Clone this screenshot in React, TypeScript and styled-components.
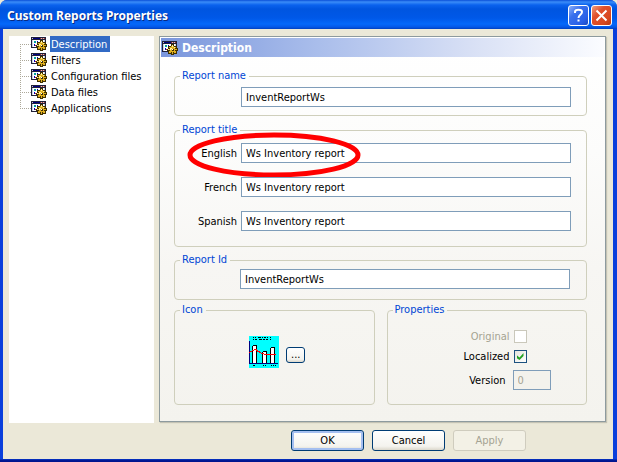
import React, { useState } from "react";
import styled, { createGlobalStyle, css } from "styled-components";

const UI_FONT = `"DejaVu Sans Condensed", "DejaVu Sans", "Liberation Sans", sans-serif`;

const GlobalStyle = createGlobalStyle`
  *, *::before, *::after { box-sizing: border-box; }
  body {
    margin: 0;
    background: #ece9d8;
    color: #000;
    font-family: ${UI_FONT};
    font-stretch: condensed;
    font-size: 11px;
    line-height: 14px;
  }
  button, input { font: inherit; color: inherit; margin: 0; }
`;

const Window = styled.main`
  display: flex;
  flex-direction: column;
  min-height: 100vh;
  border-radius: 7px 7px 0 0;
  overflow: hidden;
  background: #0a3fdc;
`;

const TitleBar = styled.header`
  display: flex;
  align-items: center;
  gap: 2px;
  height: 29px;
  padding: 2px 5px 0 7px;
  background: linear-gradient(
    #0a4fd8 0,
    #3a8cf8 2px,
    #0a62ee 5px,
    #0055e0 9px,
    #0058e8 18px,
    #0468fa 24px,
    #0458e8 27px,
    #0040c0 29px
  );
`;

const Title = styled.h1`
  flex: 1;
  margin: 0;
  padding-top: 1px;
  color: #fff;
  font: bold 12px/18px "Noto Sans", "Open Sans", sans-serif;
  text-shadow: 1px 1px 0 #0a2a80;
`;

const CaptionButton = styled.button<{ $close?: boolean }>`
  width: 21px;
  height: 21px;
  padding: 0;
  border: 1px solid #fff;
  border-radius: 3px;
  background: ${(p) =>
    p.$close
      ? "linear-gradient(135deg, #f0a080, #e0502c 35%, #d84820 75%, #b83810)"
      : "linear-gradient(135deg, #8cb0f8, #3a70ec 35%, #2a60e8 75%, #1c48c0)"};
  svg { display: block; }
`;

const Client = styled.div`
  flex: 1;
  display: flex;
  flex-direction: column;
  gap: 7px;
  margin: 0 4px 0 3px;
  padding: 7px 7px 8px 6px;
  background: #ebe8d8;
`;

const Frame = styled.div`
  height: 3px;
  background: linear-gradient(#0a3fdc, #001c98 1px, #00138c);
`;

const Columns = styled.div`
  display: grid;
  grid-template-columns: 145px 1fr;
  gap: 5px;
  flex: 1;
`;

const Tree = styled.ul`
  margin: 0;
  padding: 0;
  list-style: none;
  background: #fff;
`;

const dotted = "#aca899";

const TreeItem = styled.li`
  display: grid;
  grid-template-columns: 11px 19px auto;
  justify-content: start;
  height: 16px;
  padding-left: 11px;
  &::before {
    content: "";
    height: 16px;
    background:
      repeating-linear-gradient(90deg, ${dotted} 0 1px, transparent 1px 2px) 0 8px / 11px 1px no-repeat,
      repeating-linear-gradient(${dotted} 0 1px, transparent 1px 2px) 0 0 / 1px 16px no-repeat;
  }
  &:first-child::before { background-position: 0 8px, 0 8px; }
  &:last-child::before { background-size: 11px 1px, 1px 8px; }
`;

const TreeButton = styled.button<{ $selected: boolean }>`
  height: 16px;
  padding: 1px 3px 0 1px;
  border: 0;
  background: ${(p) => (p.$selected ? "#316ac5" : "transparent")};
  color: ${(p) => (p.$selected ? "#fff" : "#000")};
  line-height: 15px;
  text-align: left;
  white-space: nowrap;
`;

const Panel = styled.section`
  align-self: start;
  min-width: 0;
  padding: 1px;
  border: 1px solid #8d9a9e;
  background: linear-gradient(#fff, #fcfcfb 30%, #f7f6f3 60%, #f4f3ee);
  box-shadow: 1px 1px 1px #c4c2b4;
`;

const PanelHeader = styled.div`
  display: flex;
  align-items: center;
  gap: 4px;
  height: 19px;
  padding-left: 1px;
  background: linear-gradient(90deg, #7a96dc, #a9bdeb 35%, #d8e0f5 70%, #fbfcff);
`;

const PanelTitle = styled.h2`
  margin: 0;
  color: #fff;
  font: bold 12px/18px ${UI_FONT};
`;

const Groups = styled.form`
  display: flex;
  flex-direction: column;
  padding: 12px 17px 15px 13px;
`;

const Group = styled.fieldset<{ $above?: number }>`
  min-width: 0;
  margin: ${(p) => p.$above ?? 0}px 0 0;
  padding: 0 5px;
  border: 1px solid #cfcfbc;
  border-radius: 4px;
`;

const Legend = styled.legend`
  padding: 0 3px 0 2px;
  color: #0046d5;
  line-height: 14px;
`;

const Fields = styled.div<{ $pad: string }>`
  display: grid;
  gap: 14px;
  padding: ${(p) => p.$pad};
`;

const Field = styled.div`
  position: relative;
  display: grid;
  grid-template-columns: 56px 1fr;
  align-items: center;
  gap: 4px;
`;

const FieldLabel = styled.label`
  padding-top: 2px;
  text-align: right;
`;

const TextBox = styled.input`
  grid-column: 2;
  width: 100%;
  height: 20px;
  padding: 0 4px;
  border: 1px solid #7f9db9;
  border-radius: 0;
  background: #fff;
  outline: 0;
  &:disabled {
    background: #f3f2ec;
    color: #a5a392;
  }
`;

const Highlight = styled.svg`
  position: absolute;
  left: 6px;
  top: -11px;
  pointer-events: none;
`;

const Pair = styled.div`
  display: grid;
  grid-template-columns: 1fr 1fr;
  gap: 12px;
  margin-top: 3px;
`;

const IconChooser = styled.div`
  display: flex;
  justify-content: center;
  align-items: center;
  gap: 7px;
  height: 87px;
  padding: 0 0 17px 6px;
  svg { display: block; }
`;

const buttonFace = css`
  border: 1px solid #003c74;
  border-radius: 3px;
  background: linear-gradient(#fff, #f4f3ee 80%, #dcd8cc);
`;

const BrowseButton = styled.button`
  width: 19px;
  height: 16px;
  padding: 0;
  line-height: 12px;
  margin-top: 6px;
  ${buttonFace}
`;

const Options = styled.div`
  display: grid;
  grid-template-columns: 117px 38px;
  align-items: center;
  gap: 7px 3px;
  padding: 13px 0 14px;
`;

const OptionLabel = styled.label<{ $muted?: boolean; $pull?: boolean }>`
  text-align: right;
  line-height: 13px;
  padding-right: ${(p) => (p.$pull ? 4 : 0)}px;
  color: ${(p) => (p.$muted ? "#a5a392" : "#000")};
`;

const CheckBox = styled.input`
  appearance: none;
  display: grid;
  place-items: center;
  width: 13px;
  height: 13px;
  margin-left: 1px;
  border: 1px solid #1c5180;
  background: linear-gradient(135deg, #e4e4de, #fff);
  &:checked::before {
    content: "";
    width: 7px;
    height: 7px;
    background: #21a121;
    clip-path: polygon(0 29%, 43% 65%, 100% 0, 100% 43%, 43% 100%, 0 71%);
  }
  &:disabled {
    border-color: #cac8bb;
    background: #fff;
  }
`;

const Actions = styled.footer`
  display: flex;
  justify-content: flex-end;
  gap: 8px;
  padding-right: 80px;
`;

const ActionButton = styled.button<{ $primary?: boolean }>`
  width: 73px;
  height: 21px;
  padding: 0;
  ${buttonFace}
  ${(p) => p.$primary && "box-shadow: inset 0 0 0 2px #a5bff0;"}
  &:disabled {
    border-color: #cfccbe;
    background: #f3f1e6;
    color: #a5a392;
  }
`;

function ReportGearIcon() {
  return (
    <svg width="16" height="16" viewBox="0 0 16 16" shapeRendering="crispEdges" aria-hidden="true">
      <path fill="#202038" d="M0 1h15v11H0z" />
      <path fill="#000080" d="M1 2h13v1H1z" />
      <path fill="#a03030" d="M9 2h5v1H9z" />
      <path fill="#c8c8c8" d="M1 2h1v1H1zM10 2h1v1h-1zM12 2h1v1h-1z" />
      <path fill="#fff" d="M1 4h13v7H1z" />
      <path fill="#c9d4e4" d="M1 4h1v7H1zM13 4h1v3h-1z" />
      <path fill="#00a0a0" d="M3 5h2v2H3z" />
      <path fill="#0000c0" d="M6 5h1v1H6zM3 8h1v2H3z" />
      <path fill="#c02020" d="M7 6h1v1H7zM4 9h1v1H4z" />
      <path fill="#403000" d="M9 4h3v2h3v2h1v3h-1v3h-3v1H9v-1H6v-3H5V9h1V6h3z" />
      <path
        fill="#e0b020"
        d="M10 5h1v1h1v1h2v1h-1v1h2v1h-2v1h1v2h-2v-1h-1v2h-1v-2H9v1H7v-2h1v-1H6V9h2V8H7V7h2V6h1z"
      />
      <path fill="#fff2a0" d="M10 5h1v2h-1zM8 8h2v1H9v1H8zM6 9h1v1H6zM12 7h1v1h-1z" />
      <path fill="#fff" d="M10 9h2v2h-2z" />
      <path fill="#403000" d="M11 9h1v2h-2v-1h1z" />
    </svg>
  );
}

function ChartIcon() {
  return (
    <svg width="30" height="32" viewBox="0 0 30 32" shapeRendering="crispEdges" role="img" aria-label="Bar chart">
      <path fill="#00ffff" d="M0 0h30v32H0z" />
      <path
        fill="#000"
        d="M4 1h1v1H4zM6 1h1v1H6zM9 1h3v1H9zM13 1h1v1h-1zM15 1h2v1h-2zM18 1h1v1h-1zM21 1h1v1h-1zM4 3h1v1H4zM6 3h2v1H6zM10 3h3v1h-3zM14 3h2v1h-2zM17 3h2v1h-2zM21 3h1v1h-1z"
      />
      <path
        fill="#000"
        d="M4 9h4v18H3V10h1zM14 15h4v12h-5V16h1zM22 11h4v16h-5V12h1zM4 29h2v1H4zM14 29h1v1h-1zM16 29h1v1h-1zM22 29h1v1h-1zM24 29h1v1h-1zM26 29h1v1h-1z"
      />
      <path fill="#fff" d="M4 10h3v17H4zM14 16h3v11h-3zM22 12h3v15h-3z" />
      <path fill="#000080" d="M0 5h1v22h28v1H0z" />
      <path
        fill="#ff0000"
        d="M0 16h1v-1h2v-1h2v-1h3v1h1v1h2v1h1v1h3v1h12v1H15v-1h-3v-1h-2v-1H8v-1H7v-1H5v1H3v1H1v1H0z"
      />
    </svg>
  );
}

const sections = ["Description", "Filters", "Configuration files", "Data files", "Applications"];
const titles = ["English", "French", "Spanish"];

export default function App() {
  const [section, setSection] = useState("Description");

  return (
    <>
      <GlobalStyle />
      <Window>
        <TitleBar>
          <Title>Custom Reports Properties</Title>
          <CaptionButton aria-label="Help">
            <svg width="19" height="19" viewBox="0 0 19 19" fill="none" stroke="#fff" strokeWidth="2">
              <path d="M6 7V6c0-3 7-3 7 0 0 3-3.500 2.500-3.500 6M9.500 13.500v2" />
            </svg>
          </CaptionButton>
          <CaptionButton $close aria-label="Close">
            <svg width="19" height="19" viewBox="0 0 19 19" fill="none" stroke="#fff" strokeWidth="2">
              <path d="M4.500 4.500l10 10M14.500 4.500l-10 10" />
            </svg>
          </CaptionButton>
        </TitleBar>

        <Client>
          <Columns>
            <Tree>
              {sections.map((name) => (
                <TreeItem key={name}>
                  <ReportGearIcon />
                  <TreeButton $selected={name === section} onClick={() => setSection(name)}>
                    {name}
                  </TreeButton>
                </TreeItem>
              ))}
            </Tree>

            <Panel>
              <PanelHeader>
                <ReportGearIcon />
                <PanelTitle>Description</PanelTitle>
              </PanelHeader>
              <Groups>
                <Group>
                  <Legend>Report name</Legend>
                  <Fields $pad="4px 10px 8px 1px">
                    <Field>
                      <TextBox aria-label="Report name" defaultValue="InventReportWs" />
                    </Field>
                  </Fields>
                </Group>

                <Group $above={7}>
                  <Legend>Report title</Legend>
                  <Fields $pad="6px 10px 15px 1px">
                    {titles.map((language) => (
                      <Field key={language}>
                        <FieldLabel htmlFor={language}>{language}</FieldLabel>
                        <TextBox id={language} defaultValue="Ws Inventory report" />
                        {language === "English" && (
                          <Highlight width="174" height="47" viewBox="0 0 174 47" aria-hidden="true">
                            <ellipse cx="87" cy="23" rx="84" ry="20" fill="none" stroke="#f00" strokeWidth="5" />
                          </Highlight>
                        )}
                      </Field>
                    ))}
                  </Fields>
                </Group>

                <Group $above={6}>
                  <Legend>Report Id</Legend>
                  <Fields $pad="2px 11px 10px 0">
                    <Field>
                      <TextBox aria-label="Report Id" defaultValue="InventReportWs" />
                    </Field>
                  </Fields>
                </Group>

                <Pair>
                  <Group>
                    <Legend>Icon</Legend>
                    <IconChooser>
                      <ChartIcon />
                      <BrowseButton type="button" aria-label="Choose icon">
                        ...
                      </BrowseButton>
                    </IconChooser>
                  </Group>
                  <Group>
                    <Legend>Properties</Legend>
                    <Options>
                      <OptionLabel $muted htmlFor="original">Original</OptionLabel>
                      <CheckBox id="original" type="checkbox" disabled />
                      <OptionLabel htmlFor="localized">Localized</OptionLabel>
                      <CheckBox id="localized" type="checkbox" defaultChecked />
                      <OptionLabel $pull htmlFor="version">Version</OptionLabel>
                      <TextBox id="version" defaultValue="0" disabled />
                    </Options>
                  </Group>
                </Pair>
              </Groups>
            </Panel>
          </Columns>

          <Actions>
            <ActionButton $primary>OK</ActionButton>
            <ActionButton>Cancel</ActionButton>
            <ActionButton disabled>Apply</ActionButton>
          </Actions>
        </Client>
        <Frame />
      </Window>
    </>
  );
}
